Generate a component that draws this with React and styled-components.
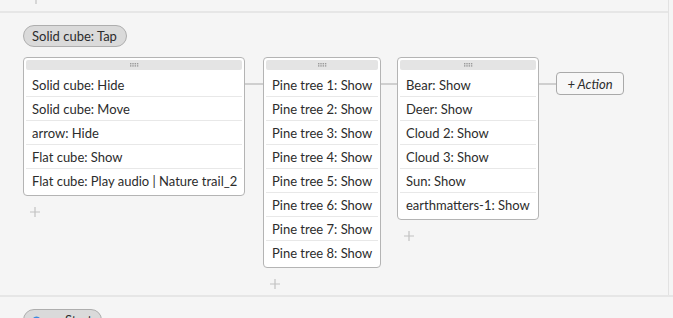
import styled, { createGlobalStyle } from 'styled-components';

const GlobalStyle = createGlobalStyle`
  body {
    margin: 0;
    background: #f5f5f5;
    font-family: Lato, "Noto Sans", sans-serif;
    color: #2c2c2c;
  }
`;

const Page = styled.div`
  width: 673px;
  height: 318px;
  overflow: hidden;
`;

const Framed = styled.div`
  width: 668px;
  border-right: 1px solid #e2e2e2;
`;

const Stub = styled.div`
  height: 11px;
  overflow: hidden;
  padding-left: 31px;
`;

const Divider = styled.div`
  height: 2px;
  background: #e6e6e6;
`;

const Block = styled.section`
  box-sizing: border-box;
  height: ${p => p.$h}px;
  padding: 12px 0 0 23px;
  display: flex;
  flex-direction: column;
  align-items: flex-start;
  gap: 10px;
`;

const Trigger = styled.div`
  display: flex;
  align-items: center;
  gap: 6px;
  height: 20px;
  padding: 0 9px 0 8px;
  border: 1px solid #aeaeae;
  border-radius: 11px;
  background: #dadada;
  font-size: 13px;
  white-space: nowrap;
`;

const Flow = styled.div`
  display: flex;
  align-items: flex-start;
`;

const Column = styled.div`
  display: flex;
  flex-direction: column;
  align-items: flex-start;
`;

const Card = styled.div`
  box-sizing: border-box;
  width: ${p => p.$w}px;
  padding: 2px;
  border: 1px solid #b4b4b4;
  border-radius: 4px;
  background: #fff;
`;

const Grip = styled.div`
  height: 10px;
  margin-bottom: 3px;
  border-radius: 2px;
  background: #e4e4e4;
  display: flex;
  align-items: center;
  justify-content: center;
`;

const Row = styled.div`
  height: 24px;
  box-sizing: border-box;
  padding: 0 6px;
  display: flex;
  align-items: center;
  font-size: 13px;
  white-space: nowrap;
  border-bottom: 1px solid #e8e8e8;
  &:last-child {
    border-bottom: none;
  }
`;

const Link = styled.div`
  width: ${p => p.$w}px;
  height: 1.5px;
  margin-top: 26px;
  background: #cfcfcf;
`;

const ActionButton = styled.button`
  box-sizing: border-box;
  margin-top: 15px;
  width: 68px;
  height: 23px;
  padding: 0;
  border: 1px solid #a9a9a9;
  border-radius: 4px;
  background: #f7f7f7;
  font-family: Lato, "Noto Sans", sans-serif;
  font-style: italic;
  font-size: 13px;
  color: #2c2c2c;
`;

const AddMark = styled.div`
  width: 10px;
  height: 10px;
  margin: ${p => p.$top ?? 11}px 0 0 ${p => p.$left ?? 7}px;
  color: #c2c2c2;
  display: flex;
`;

const Plus = ({ top, left }) => (
  <AddMark $top={top} $left={left}>
    <svg width="10" height="10" viewBox="0 0 10 10">
      <path d="M5 0v10M0 5h10" stroke="currentColor" strokeWidth="1.2" />
    </svg>
  </AddMark>
);

const Dots = () => (
  <svg width="9" height="4" viewBox="0 0 9 4">
    {[0, 1].map(r =>
      [0, 1, 2, 3].map(c => (
        <rect key={`${r}${c}`} x={c * 2.3} y={r * 2.2} width="1.4" height="1.4" fill="#9a9a9a" />
      ))
    )}
  </svg>
);

const SceneIcon = () => (
  <svg width="9" height="9" viewBox="0 0 9 9">
    <circle cx="4.5" cy="4.5" r="4" fill="#3b8be0" />
  </svg>
);

const groups = [
  {
    width: 222,
    gap: 18,
    items: [
      'Solid cube: Hide',
      'Solid cube: Move',
      'arrow: Hide',
      'Flat cube: Show',
      'Flat cube: Play audio | Nature trail_2',
    ],
  },
  {
    width: 118,
    gap: 16,
    items: [1, 2, 3, 4, 5, 6, 7, 8].map(n => `Pine tree ${n}: Show`),
  },
  {
    width: 142,
    gap: 17,
    items: [
      'Bear: Show',
      'Deer: Show',
      'Cloud 2: Show',
      'Cloud 3: Show',
      'Sun: Show',
      'earthmatters-1: Show',
    ],
  },
];

function App() {
  return (
    <Page>
      <GlobalStyle />
      <Framed>
        <Stub>
          <Plus top={-6} left={0} />
        </Stub>
        <Divider />
        <Block $h={282}>
          <Trigger>Solid cube: Tap</Trigger>
          <Flow>
            {groups.map((g, i) => (
              <Flow key={i}>
                <Column>
                  <Card $w={g.width}>
                    <Grip>
                      <Dots />
                    </Grip>
                    {g.items.map(t => (
                      <Row key={t}>{t}</Row>
                    ))}
                  </Card>
                  <Plus />
                </Column>
                <Link $w={g.gap} />
              </Flow>
            ))}
            <ActionButton>+ Action</ActionButton>
          </Flow>
        </Block>
      </Framed>
      <Divider />
      <Block $h={40}>
        <Trigger>
          <SceneIcon />
          on Start
        </Trigger>
      </Block>
    </Page>
  );
}

export default App;
